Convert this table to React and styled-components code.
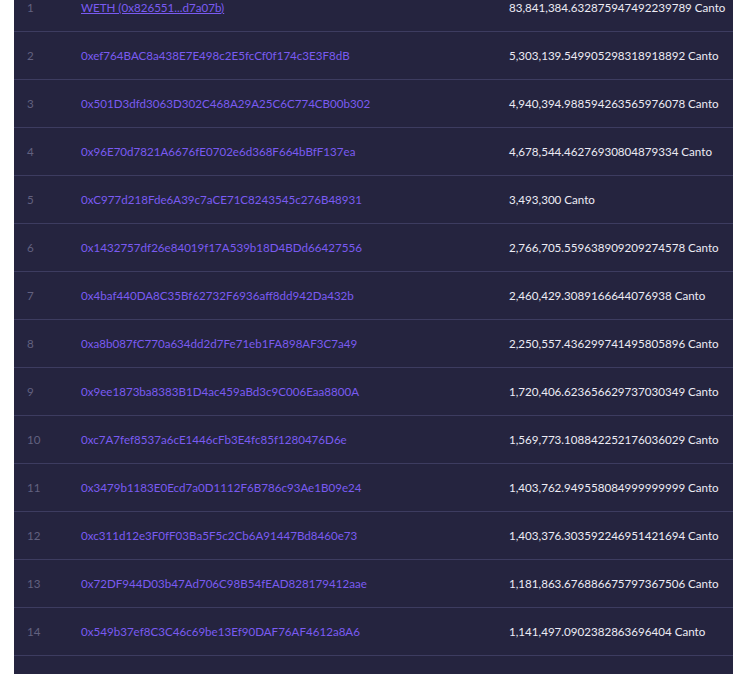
import styled, { createGlobalStyle } from "styled-components"

const GlobalStyle = createGlobalStyle`
  body {
    margin: 0;
    background: #ffffff;
    font-family: "Lato", "Noto Sans", sans-serif;
  }
`

const Page = styled.div`
  height: 674px;
  overflow: hidden;
`

const Table = styled.div`
  width: 719px;
  margin: -16px 0 0 14px;
  background: #25243f;
  padding-bottom: 40px;
`

const Row = styled.div`
  display: grid;
  grid-template-columns: 54px 428px 1fr;
  align-items: center;
  height: 47px;
  padding-left: 13px;
  border-bottom: 1px solid #3d3c60;
  font-size: 11.6px;
`

const Rank = styled.span`
  color: #62617f;
`

const Holder = styled.a`
  color: #7a5bf2;
  text-decoration: ${(p) => (p.$named ? "underline" : "none")};
  white-space: nowrap;
`

const Amount = styled.span`
  color: #ecebf4;
  white-space: nowrap;
`

const holders = [
  ["WETH (0x826551...d7a07b)", "83,841,384.632875947492239789", true],
  ["0xef764BAC8a438E7E498c2E5fcCf0f174c3E3F8dB", "5,303,139.549905298318918892"],
  ["0x501D3dfd3063D302C468A29A25C6C774CB00b302", "4,940,394.988594263565976078"],
  ["0x96E70d7821A6676fE0702e6d368F664bBfF137ea", "4,678,544.46276930804879334"],
  ["0xC977d218Fde6A39c7aCE71C8243545c276B48931", "3,493,300"],
  ["0x1432757df26e84019f17A539b18D4BDd66427556", "2,766,705.559638909209274578"],
  ["0x4baf440DA8C35Bf62732F6936aff8dd942Da432b", "2,460,429.3089166644076938"],
  ["0xa8b087fC770a634dd2d7Fe71eb1FA898AF3C7a49", "2,250,557.436299741495805896"],
  ["0x9ee1873ba8383B1D4ac459aBd3c9C006Eaa8800A", "1,720,406.623656629737030349"],
  ["0xc7A7fef8537a6cE1446cFb3E4fc85f1280476D6e", "1,569,773.108842252176036029"],
  ["0x3479b1183E0Ecd7a0D1112F6B786c93Ae1B09e24", "1,403,762.949558084999999999"],
  ["0xc311d12e3F0fF03Ba5F5c2Cb6A91447Bd8460e73", "1,403,376.303592246951421694"],
  ["0x72DF944D03b47Ad706C98B54fEAD828179412aae", "1,181,863.676886675797367506"],
  ["0x549b37ef8C3C46c69be13Ef90DAF76AF4612a8A6", "1,141,497.0902382863696404"],
]

export default function App() {
  return (
    <Page>
      <GlobalStyle />
      <Table>
        {holders.map(([address, amount, named], i) => (
          <Row key={address}>
            <Rank>{i + 1}</Rank>
            <Holder href="#" $named={named}>
              {address}
            </Holder>
            <Amount>{amount} Canto</Amount>
          </Row>
        ))}
      </Table>
    </Page>
  )
}
